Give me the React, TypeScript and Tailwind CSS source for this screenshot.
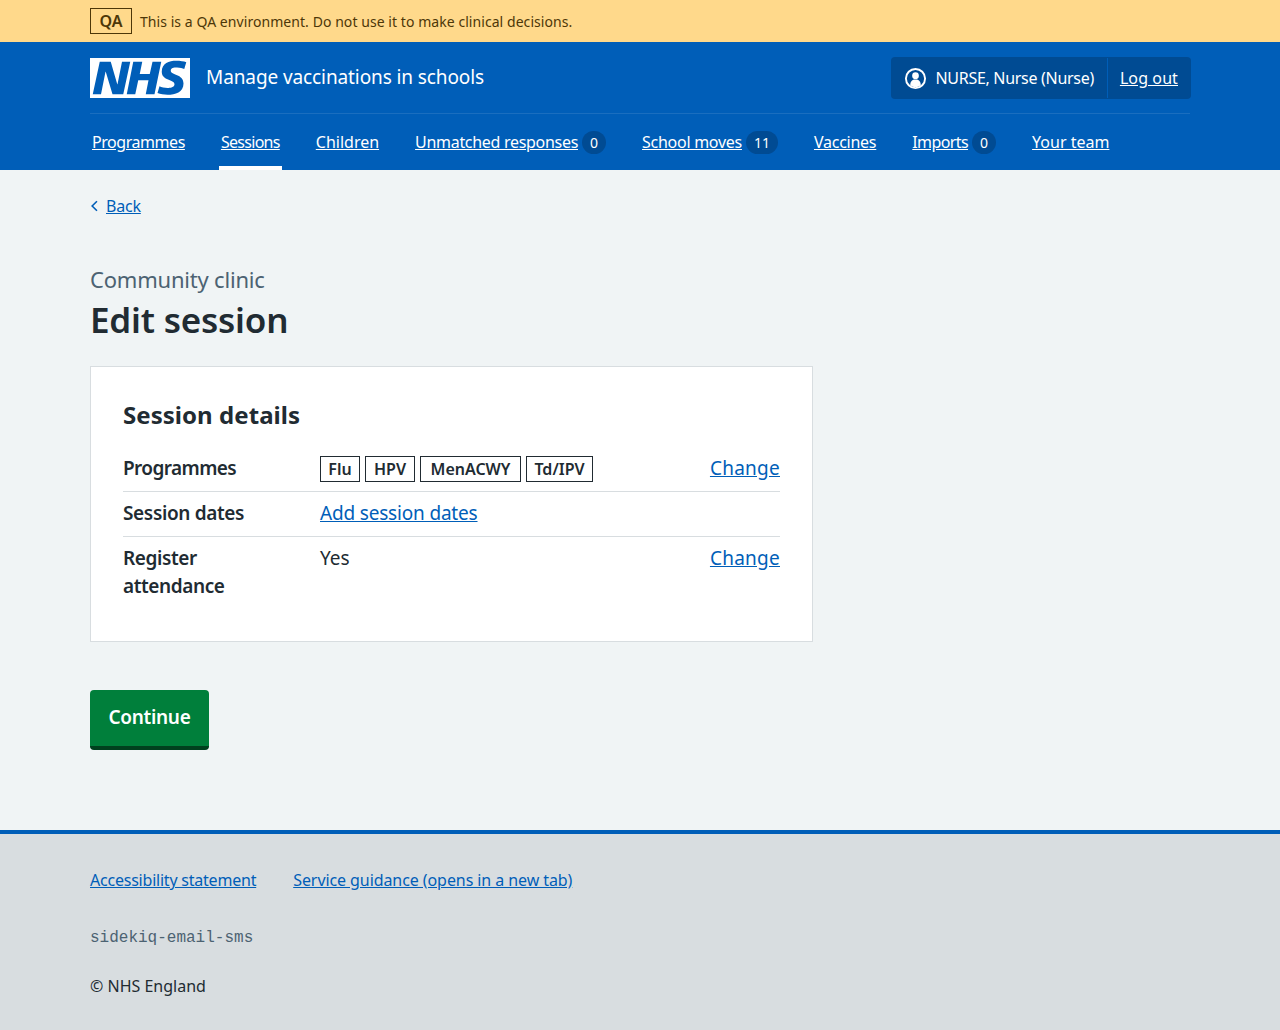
import React from "react";

const navItems: { label: string; tracking: string; count?: number; active?: boolean }[] = [
  { label: "Programmes", tracking: "tracking-[-0.45px]" },
  { label: "Sessions", tracking: "tracking-[-0.7px]", active: true },
  { label: "Children", tracking: "tracking-normal" },
  { label: "Unmatched responses", tracking: "tracking-[-0.3px]", count: 0 },
  { label: "School moves", tracking: "tracking-[-0.27px]", count: 11 },
  { label: "Vaccines", tracking: "tracking-[-0.25px]" },
  { label: "Imports", tracking: "tracking-[-0.6px]", count: 0 },
  { label: "Your team", tracking: "tracking-normal" },
];

const NhsLogo = () => (
  <svg viewBox="0 0 40 16" className="block h-10 w-[100px]" aria-label="NHS">
    <path fill="#fff" d="M0 0h40v16H0z" />
    <path
      fill="#005eb8"
      d="M3.9 1.5h4.4l2.6 9h.1l1.8-9h3.3l-2.8 13H9l-2.7-9h-.1l-1.8 9H1.1M17.3 1.5h3.6l-1 4.9h4L25 1.5h3.5l-2.7 13h-3.5l1.1-5.6h-4.1l-1.2 5.6h-3.4M37.7 4.4c-.7-.3-1.6-.6-2.9-.6-1.4 0-2.5.2-2.5 1.3 0 1.8 5.1 1.2 5.1 5.1 0 3.6-3.3 4.5-6.4 4.500-1.3 0-2.9-.3-4-.7l.8-2.7c.7.4 2.1.7 3.2.7s2.8-.2 2.8-1.5c0-2.1-5.1-1.3-5.1-5 0-3.4 2.9-4.4 5.8-4.4 1.6 0 3.1.2 4 .6"
    />
  </svg>
);

const UserIcon = () => (
  <svg viewBox="0 0 24 24" className="size-[23px]" fill="none">
    <circle cx="12" cy="12" r="10" stroke="#fff" strokeWidth="2" />
    <circle cx="12" cy="9" r="3.5" fill="#fff" />
    <path fill="#fff" d="M6.500 19c0-4 2-6 5.500-6s5.500 2 5.500 6c-1.600 1.400-3.500 2-5.500 2s-3.900-.6-5.500-2z" />
  </svg>
);

const Tag = ({ className, children }: { className: string; children: React.ReactNode }) => (
  <span
    className={`flex h-[26px] items-center justify-center border border-[#212b32] text-[16px] font-semibold text-[#212b32] ${className}`}
  >
    {children}
  </span>
);

const ChangeLink = () => (
  <a className="text-[19px] leading-7 tracking-[0.25px] text-[#005eb8] underline">Change</a>
);

export default function App() {
  return (
    <div className="flex min-h-[1030px] flex-col bg-[#f0f4f5] font-['Noto_Sans',sans-serif] text-[#212b32]">
      <div className="h-[42px] bg-[#ffd98b]">
        <div className="mx-auto flex h-full w-[1100px] items-center gap-2">
          <span className="flex h-[26px] w-[42px] items-center justify-center border border-[#4d3708] text-[16px] font-semibold text-[#4d3708]">
            QA
          </span>
          <span className="text-[14px] tracking-[0.06px] text-[#4d3708]">
            This is a QA environment. Do not use it to make clinical decisions.
          </span>
        </div>
      </div>

      <header className="h-[128px] bg-[#005eb8] text-white">
        <div className="mx-auto w-[1100px]">
          <div className="flex h-[72px] items-start justify-between border-b border-[#1a6ebf] pt-[15px]">
            <div className="flex items-center gap-4 pt-px">
              <NhsLogo />
              <span className="pb-[2px] text-[19px] tracking-[-0.1px]">Manage vaccinations in schools</span>
            </div>
            <div className="-mr-px flex h-[42px] items-center rounded-[4px] bg-[#004b93] text-[16px]">
              <div className="flex h-full items-center gap-[9px] pr-[13px] pl-[13px]">
                <UserIcon />
                <span className="tracking-[-0.3px]">NURSE, Nurse (Nurse)</span>
              </div>
              <div className="h-10 w-px bg-[#005eb8]" />
              <a className="pr-[13px] pl-3 tracking-[0.1px] underline">Log out</a>
            </div>
          </div>
          <nav className="flex h-[56px] gap-[32px]">
            {navItems.map((item) => (
              <div
                key={item.label}
                className={`flex h-full items-center gap-1 border-b-4 px-[2px] pt-1 text-[16px] ${
                  item.active ? "border-white" : "border-transparent"
                }`}
              >
                <a className={`underline ${item.tracking}`}>{item.label}</a>
                {item.count !== undefined && (
                  <span className="flex h-[23px] min-w-[23px] items-center justify-center rounded-full bg-[#004b93] px-[8px] text-[14px]">
                    {item.count}
                  </span>
                )}
              </div>
            ))}
          </nav>
        </div>
      </header>

      <main className="mx-auto w-[1100px] flex-1">
        <a className="mt-6 flex items-center gap-[8px] text-[16px] leading-6 tracking-[-0.2px] text-[#005eb8]">
          <svg viewBox="0 0 8 14" className="ml-px h-[14px] w-[7px]" fill="none">
            <path d="M6.800 1.500 1.300 7l5.500 5.500" stroke="#005eb8" strokeWidth="1.800" />
          </svg>
          <span className="underline">Back</span>
        </a>

        <p className="mt-[45px] text-[22px] leading-8 tracking-[-0.2px] text-[#4c6272]">Community clinic</p>
        <h1 className="mt-[3px] text-[35px] leading-[44px] font-semibold tracking-[-0.2px]">Edit session</h1>

        <section className="mt-6 w-[723px] border border-[#d8dde0] bg-white px-8 pt-8 pb-[41px]">
          <h2 className="text-[24px] leading-8 font-bold tracking-[0.05px]">Session details</h2>
          <dl className="mt-[15px] text-[19px] leading-7">
            <div className="flex h-[46px] items-start border-b border-[#d8dde0] pt-2">
              <dt className="w-[197px] font-semibold tracking-[-0.6px]">Programmes</dt>
              <dd className="flex flex-1 items-center justify-between">
                <div className="mt-[2px] flex gap-[5px]">
                  <Tag className="w-10">Flu</Tag>
                  <Tag className="w-[50px]">HPV</Tag>
                  <Tag className="w-[101px]">MenACWY</Tag>
                  <Tag className="w-[67px]">Td/IPV</Tag>
                </div>
                <ChangeLink />
              </dd>
            </div>
            <div className="flex h-[45px] items-start border-b border-[#d8dde0] pt-[7px]">
              <dt className="w-[197px] font-semibold tracking-[-0.35px]">Session dates</dt>
              <dd>
                <a className="tracking-[-0.18px] text-[#005eb8] underline">Add session dates</a>
              </dd>
            </div>
            <div className="flex pt-[7px]">
              <dt className="w-[197px] pr-10 font-semibold tracking-[-0.4px]">Register attendance</dt>
              <dd className="flex flex-1 justify-between">
                <span>Yes</span>
                <ChangeLink />
              </dd>
            </div>
          </dl>
        </section>

        <button className="mt-12 flex h-[60px] w-[119px] items-center justify-center rounded-[4px] border-b-4 border-[#00401e] bg-[#007f3b] pb-px text-[19px] font-semibold tracking-[-0.3px] text-white">
          Continue
        </button>
      </main>

      <footer className="h-[200px] border-t-4 border-[#005eb8] bg-[#d8dde0]">
        <div className="mx-auto w-[1100px]">
          <div className="flex gap-[37px] pt-[34px] text-[16px] leading-6 text-[#005eb8]">
            <a className="tracking-[-0.22px] underline">Accessibility statement</a>
            <a className="tracking-[-0.08px] underline">Service guidance (opens in a new tab)</a>
          </div>
          <p className="mt-[34px] font-['Liberation_Mono',monospace] text-[16px] leading-6 text-[#4c6272]">
            sidekiq-email-sms
          </p>
          <p className="mt-[24px] text-[16px] leading-6">© NHS England</p>
        </div>
      </footer>
    </div>
  );
}
